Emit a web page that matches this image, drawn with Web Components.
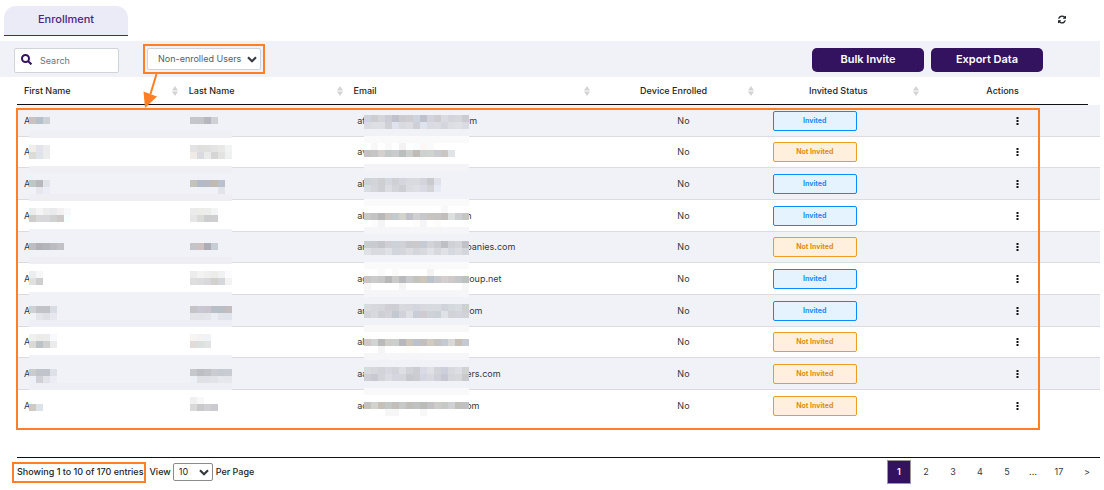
<!DOCTYPE html>
<html lang="en">
<head>
<meta charset="utf-8">
<title>Enrollment</title>
<style>
  body { margin: 0; background: #fff; color: #212529; font: 9px/12px Inter, "Liberation Sans", sans-serif; --accent: #33125f; --mark: #ff7f27; --stripe: #f1f2f8; }
</style>
</head>
<body>
<enrollment-page></enrollment-page>
<script>
const define = (name, html, setup) => customElements.define(name, class extends HTMLElement {
  constructor() {
    super();
    const template = document.createElement('template');
    template.innerHTML = html;
    this.attachShadow({ mode: 'open' }).append(template.content.cloneNode(true));
  }
  connectedCallback() { if (setup) setup(this, this.shadowRoot); }
});

/* Pixelated covers over private data. Lines: row, first column, colours; "*" repeats a colour */
const MASKS = {
names: `
0 0 c9c2c0 b6c0cb ccd1d5
0 23 c6c5c9 c4c5ca b6b6be cfd0d3
2 0 eff0f4*29
4 0 f1eee9 e3e4eb ececef
4 23 e3e3e3 dfdfde e0e0df e4e4e4 e8e8e6 f2f3f3
5 0 dcdbd6 dfe3ea ececec
5 23 efeae6 dadbe0 e9eaea d6d6d7 e3e4e1 eff1f1
7 0 f0f0f4*29
9 0 bfc7c6 b8b7be e1e3e8
9 23 c3c3bc b3bac7 b9b9c4 c1bab0 b9c1cf
10 1 e8e6ed eceef7
10 27 e3e4e9
11 0 efeff3*29
13 0 ececec f4f5f4 ededee e9eaeb f2f0f0 f7f9fa
13 23 ebebeb ecece9 ededec f3f4f5
14 0 cfcdca d7d8da d8d8dc d0d1d1 cfcaca f8ffff
14 23 e6e6e6 dbdbd9 cdcecf cfcfd1
16 0 f1f2f7*29
18 0 bdbdc3 b0b0b5 b4b5bb babcc0 c1c1c6
18 23 c3c4c7 cdc0c1 adadb7 c6ced5
20 0 efeff3*29
22 0 ededed f6f7f9
22 23 ececec f3f3f3 efefee ecece9 f0f1f1 fafaff
23 0 e0e0e0 cfcfd0
23 23 dedede dbdcdd d9d9dc d3d1cd d6d7dd f3f3f3
25 0 f1f2f7*29
27 0 cfd0d4 c1c3c8 c1c3c7 d8dce5
27 23 c4c3c6 c8c7d3 c9c4cd b8bfc6 b6bfc6 c4bdbf
28 1 e4e5ea dfe0e5 e7e8ef
28 23 e2e4e8 e2e3e9 e4e5ea ebedf5 e3e4e9 e0e4ec
29 0 eeeff5*29
31 0 f0f0ee ebecea ececec f7f9fc
31 23 f6f5f4 f4f2f2 eff3f5
32 0 d9d9d6 bdc2c7 d0d0d0 ebebec
32 23 e1dcda dae1df e2e3e3
34 0 f1f2f7*29
36 0 cacbcd bfc5ca c2c4cb dde2e9
36 23 c6c7cb bdbec3 c2c3c8 cbccd1 c6cad1 c8cdd4
37 0 edf0f6 d0d1d7 e2e3e9 ecedf4
37 23 edf0f6 dfe1e5 e0e1e6 e2e3e8 e6e8ee e5e7ed
38 0 eeeff5*29
40 23 f0f0f0 f8f8f8
41 0 cfc9c3 dbe2e9
41 23 d9d9d9 c9c9cb d0d0d3 cacbd1`,
emails: `
0 0 cdd4dd cdcccf d4d5da cbccd5 bfc2cd cbcbd0 cfcdd0 cdd4df bfc2cc d2d3dc cfcdd2 dadbe1 d4d5dc d6d6dc cbcbd2
1 0 d9dce3 dedfe4 dedee3 cfd0d6 dfe3ee d9dae0 dcdce2 cfd0d7 dfe3ed dadbe2 dbdce2 d5d6dd dddee3 dfe0e5 d9dbe0
3 0 fafafa*15
4 1 f8f8f8 fff f9f9f9 fff f4f2f3 fff fafdff fdf8f5 fafafa
5 0 c3c2c0 c5c5c8 d3d0cd c4c8c7 cacbce b9bfbd cccecc c1bbb7 cdd2d1 d0d4d1 c9cbcf cbc6c3 e0e4e8
7 0 f4f4f6*15
9 0 ced3d6 d3d4d7 cecfd1 d5d7de cfd0d5 d4d5dd d9dae0 d8dade d3d5dc c9cace dfe2ea
10 0 d9dce3 d5d6db cecfd2 dcdde3 d3d3da cecfd2 dadce1 dedfe5 d9dae3 d3d4d8 e6eaf5
12 0 fafafa*15
13 11 f8f8f8
14 0 c9c9ca c3c3c3 b8b8b9 cac6c2 c4cbce d3d2cd bfc0c8 cfcfd2 c7c8cc c8c4c0 c5c4c3 c1bebb dbe0df cdced1 c6c6c8
15 1 fdfcfa f4f4f6 fff*4 fdfcfa f5f5f8 fff fdfcfa
16 0 f6f6f8*15
18 0 c8ced0 cacbce c5c5ca d0cfd3 cdd2d8 d1d0d4 c8c9cd cdc9ca c5cbd5 d2d4d9 cccdd2 bebfc3 d0d1d5 d4d5da c1c2c7
19 0 dfe1e4 d9dade d9dadf e0e1e5 d2d5dc d5d6dc dcdce1 d5d5dc d9dade e0e2e8 d7d8de dfe1e6 d6d9df dcdde2 d3d6da
21 0 fafafa*15
22 2 fafafa fff fafafa fff*4 f3f3f4 fff fdfdfc
23 0 c6c6c6 cccbc9 c6c7c9 b9b8b8 cacac9 b9babb c7c9cd c3c2bd ccc5b9 bbc2ca c8c9cd d4cece cfcac9 c4c6c8 bcc1c2
24 0 f7f7f8 fff*4 f5f5f5 fff*8 f7f7f8
25 0 f6f6f8*15
27 0 d9dbdf d7d8dd d5d6dc d0cfd3 cecfd5 d8d9df d7d8de d3d6df d8d9df d6dbe0 d8dce1 d0d3da d4d9de d8dce0 cdd1d5
28 0 d3d4d9 d8d9de cecfd5 d2d2d8 c3c9d0 d0d3d9 dfe0e5 c9cdd8 d0cbd0 cfd3d9 cad1d7 dfe2e6 d2d2d7 d2d6dc d1d2d8
30 0 f8f8f9*15
32 0 cfc8c9 d0d5d1 bbb9b9 cecdc7 cbd0cd b8b7bd cbc5ba bbc2cb c4bfbf d0cac0 c5c3c1 c4cad2 d8d8d9 c7bfb6 c5c9d1
33 2 f5f5f5 fff*3 fffdf9 fdfdfc
34 0 f6f6f8*15
36 0 d9dade d6d7dc d2d3d8 d7d8df d3d4d9 dddee4 d2d2d8 cccdd2 d9dae3 dfe1e4 d3d4da ccd0dc d8d9df dddee4 d1d2d6
37 0 cecfd6 c8c9d2 d3d4da dcdde3 d5d6df d5d5dc c8c9cf cbcbd0 d4d7e2 d8dae0 d0d1d8 c6c8d4 d5d6dc d8d7da c9cace
39 0 f9f9fa*15
41 0 c2c2c1 d2d3cd c5c1b9 c3c7c5 c2bfbb c7c9c8 c1beba c0c1c3 bbbbb7 c2c2c5 cecccb c5c8c4 cfd0d3 c0bfb9 bfbfc4
42 3 f6f6f6*2 fff*3 f7f7f7`
};

/* Orange highlight frame drawn round whatever it is placed over */
define('mark-frame', `<style>
  :host { position: absolute; inset: 0; box-sizing: border-box; border: 2px solid var(--mark); pointer-events: none; }
</style>`);

define('page-tabs', `<style>
  :host { display: flex; justify-content: space-between; align-items: flex-start; padding: 6px 34px 5px 4px; }
  a { box-sizing: border-box; width: 124px; height: 30px; border-radius: 12px 12px 0 0; border-bottom: 1px solid #4b2384; background: #ebeaf7; color: #4a2683; font-weight: 500; font-size: 11px; line-height: 27px; text-align: center; text-decoration: none; }
  button { margin-top: 9px; padding: 0; border: 0; background: none; width: 8px; height: 9px; color: #212529; }
  svg { display: block; width: 8px; height: 9px; }
</style>
<a href="#enrollment">Enrollment</a>
<button aria-label="Refresh"><svg viewBox="0 0 1536 1536" fill="currentColor"><path d="M1511 928q0 5-1 7-64 268-268 434.500T764 1536q-146 0-282.500-55T238 1324l-129 129q-19 19-45 19t-45-19-19-45V960q0-26 19-45t45-19h448q26 0 45 19t19 45-19 45l-137 137q71 66 161 102t187 36q134 0 250-65t186-179q11-17 53-117 8-23 30-23h192q13 0 22.500 9.500t9.500 22.500zM1536 128v448q0 26-19 45t-45 19h-448q-26 0-45-19t-19-45 19-45l138-138Q969 256 768 256q-134 0-250 65T332 500q-11 17-53 117-8 23-30 23H50q-13 0-22.500-9.500T18 608v-7q65-268 270-434.500T768 0q146 0 284 55.500T1297 212l130-129q19-19 45-19t45 19 19 45z"/></svg></button>`);

define('action-button', `<style>
  :host { display: block; }
  button { display: block; width: 112px; height: 24px; padding: 0 0 3px; border: 0; border-radius: 5px; background: var(--accent); color: #fff; font: 600 11px/16px Inter, sans-serif; }
</style><button><slot></slot></button>`);

define('select-box', `<style>
  :host { display: grid; position: relative; }
  select { appearance: none; box-sizing: border-box; margin: 0; width: 114px; height: 22px; padding: 0 18px 0 10px; border: 1px solid #ced4da; border-radius: 2px; background: #fff; color: #555c63; font: 9px/14px Inter, sans-serif; overflow: hidden; }
  svg { position: absolute; right: 4px; top: 0; bottom: 0; margin: auto; width: 10px; height: 7px; fill: none; stroke: #343a40; stroke-width: 2.2; pointer-events: none; }
  :host([compact]) select { width: 40px; height: 18px; padding: 0 12px 0 5px; border-color: #8b8b8b; color: #212529; }
  :host([compact]) svg { right: 4px; }
</style>
<select></select><svg viewBox="0 0 10 7"><path d="M1 1.200 5 5.200 9 1.200"/></svg>`, (host, root) => {
  const select = root.querySelector('select');
  select.setAttribute('aria-label', host.getAttribute('label'));
  select.append(new Option(host.getAttribute('value')));
});

define('search-box', `<style>
  :host { display: flex; box-sizing: border-box; width: 105px; height: 25px; align-items: center; gap: 8px; padding: 0 6px; border: 1px solid #ced4da; border-radius: 2px; background: #fff; }
  svg { flex: none; width: 11px; height: 11px; margin-bottom: 2px; fill: none; stroke: var(--accent); stroke-width: 2; }
  input { min-width: 0; flex: 1; padding: 0; border: 0; outline: 0; background: none; font: 9px/14px Inter, sans-serif; }
  input::placeholder { color: #6c757d; opacity: 1; }
</style>
<svg viewBox="0 0 11 11"><circle cx="4.500" cy="4.500" r="3.500"/><path d="m7 7 3.400 3.400"/></svg>
<input type="search" placeholder="Search" aria-label="Search">`);

define('tool-bar', `<style>
  :host { display: flex; align-items: flex-start; height: 29px; padding: 7px 57px 0 14px; background: var(--stripe); }
  .filter { position: relative; margin: -4px 0 0 24px; padding: 4px; }
  .arrow { position: absolute; left: 0; top: 30px; width: 16px; height: 34px; z-index: 2; }
  .buttons { display: flex; gap: 7px; margin-left: auto; }
</style>
<search-box></search-box>
<div class="filter"><select-box label="User filter" value="Non-enrolled Users"></select-box><mark-frame></mark-frame>
<svg class="arrow" viewBox="0 0 16 34"><path d="M13.500 0 7.500 20" stroke="#ff7f27" stroke-width="2"/><path d="M0.500 17.500 14 22.500 2 34z" fill="#ff7f27"/></svg></div>
<div class="buttons"><action-button>Bulk Invite</action-button><action-button>Export Data</action-button></div>`);

define('pixel-mask', `<style>
  :host { display: block; position: absolute; pointer-events: none; }
  svg { display: block; shape-rendering: crispEdges; }
</style><svg aria-hidden="true"></svg>`, (host, root) => {
  const size = 7, svg = root.querySelector('svg');
  let html = '', cols = 0, rows = 0;
  for (const line of MASKS[host.getAttribute('name')].trim().split('\n')) {
    const [row, col, ...colours] = line.trim().split(/\s+/);
    let x = +col;
    for (const item of colours) {
      const [colour, count = 1] = item.split('*');
      html += `<rect x="${x * size}" y="${row * size}" width="${count * size}" height="${size}" fill="#${colour}"/>`;
      x += +count;
    }
    cols = Math.max(cols, x);
    rows = Math.max(rows, +row + 1);
  }
  svg.setAttribute('width', cols * size);
  svg.setAttribute('height', rows * size);
  svg.innerHTML = html;
});

define('status-badge', `<style>
  :host { display: block; box-sizing: border-box; width: 84px; height: 20px; border: 1px solid #0a8cff; border-radius: 2px; background: #e5f3ff; color: #1a8cff; font: 700 7px/18px Inter, sans-serif; text-align: center; }
  :host([pending]) { border-color: #ee9d22; background: #fff0de; color: #e08c12; }
</style><slot></slot>`);

define('user-table', `<style>
  :host { display: block; position: relative; margin-left: 17px; padding-bottom: 35px; }
  table, thead, tbody { display: block; }
  tr { display: grid; grid-template-columns: 2fr 2fr 3fr 2fr 2fr 2fr; align-items: center; box-sizing: border-box; }
  thead { margin-right: 12px; border-bottom: 1px solid #111; }
  thead tr { height: 27px; }
  th { display: flex; align-items: center; padding: 0 4px 0 7px; font-weight: 500; text-align: left; }
  th span { flex: 1; }
  th.mid { padding-left: 5px; text-align: center; }
  th:last-child { padding-right: 11px; }
  th svg { width: 6px; height: 10px; fill: #d3d3d3; }
  tbody tr { height: 32px; border-bottom: 1px solid #dcdce0; }
  tbody tr:nth-child(3n + 2) { height: 31px; }
  tbody tr:nth-child(odd) { background: var(--stripe); }
  tbody tr:last-child { border-color: transparent; }
  td { padding: 0 6px 0 7px; color: #33383d; }
  td.mid { text-align: center; }
  td.mid, td.status { padding: 0 6px; }
  .head { display: inline-block; width: 112px; }
  .head.cut { width: 109px; }
  button { display: block; margin: auto; padding: 0; border: 0; background: none; color: #111; }
  button svg { display: block; width: 3px; height: 8px; }
  .names { left: 12px; top: 40px; }
  .emails { left: calc(100% * 4 / 13 + 14px); top: 38px; }
  mark-frame { inset: 31px 60px 27px -1px; }
</style>
<table>
<thead><tr></tr></thead>
<tbody></tbody>
</table>
<pixel-mask class="names" name="names"></pixel-mask>
<pixel-mask class="emails" name="emails"></pixel-mask>
<mark-frame></mark-frame>`, (host, root) => {
  const sort = '<svg viewBox="0 0 6 10" aria-hidden="true"><path d="M3 0 6 4.500H0zM3 10 0 5.500h6z"/></svg>';
  root.querySelector('thead tr').innerHTML = ['First Name', 'Last Name', 'Email', 'Device Enrolled', 'Invited Status', 'Actions']
    .map((t, i) => `<th scope="col" class="${i > 2 ? 'mid' : ''}"><span>${t}</span>${i < 5 ? sort : ''}</th>`).join('');
  const users = [['af', 'm', 1], ['av', '', 0], ['al', '', 1], ['al', 'n', 1, 1], ['ar', 'panies.com', 0, 1], ['ag', 'oup.net', 1], ['ar', 'om', 1], ['al', '', 0], ['aa', 'ers.com', 0, 1], ['ac', 'om', 0, 1]];
  root.querySelector('tbody').innerHTML = users.map(([head, tail, invited, cut]) => `<tr><td>A</td><td></td>
    <td><span class="head ${cut ? 'cut' : ''}">${head}</span>${tail}</td><td class="mid">No</td>
    <td class="status"><status-badge ${invited ? '' : 'pending'}>${invited ? 'Invited' : 'Not Invited'}</status-badge></td>
    <td><button aria-label="Row actions"><svg viewBox="0 0 3 8" fill="currentColor"><path d="M.5 0h2v2h-2zM.5 3h2v2h-2zM.5 6h2v2h-2z"/></svg></button></td></tr>`).join('');
});

define('page-footer', `<style>
  :host { display: flex; align-items: center; margin-left: 17px; border-top: 1px solid #111; height: 28px; font-weight: 500; }
  .count { position: relative; margin-right: 6px; }
  .count mark-frame { inset: -4px -3px -5px -5px; }
  select-box { margin: 0 3px 0 2px; }
  nav { display: flex; align-items: center; margin-left: auto; font-weight: 400; }
  a { box-sizing: border-box; width: 24px; height: 24px; margin-right: 3px; color: #33383d; line-height: 24px; text-align: center; text-decoration: none; }
  a[aria-current] { border: 1px solid #999; background: var(--accent); color: #fff; font-weight: 600; line-height: 22px; }
  a.gap { width: 22px; }
  a:last-child { width: 26px; margin: 0; }
</style>
<span class="count">Showing 1 to 10 of 170 entries<mark-frame></mark-frame></span>
<span>View</span><select-box compact label="Entries per page" value="10"></select-box><span>Per Page</span>
<nav aria-label="Pages"><a href="#1" aria-current="page">1</a><a href="#2">2</a><a href="#3">3</a><a href="#4">4</a><a href="#5">5</a><a class="gap" href="#more">...</a><a href="#17">17</a><a href="#next">&gt;</a></nav>`);

define('enrollment-page', `<style>:host { display: block; margin-right: 4px; }</style>
<page-tabs></page-tabs><tool-bar></tool-bar><user-table></user-table><page-footer></page-footer>`);
</script>
</body>
</html>
